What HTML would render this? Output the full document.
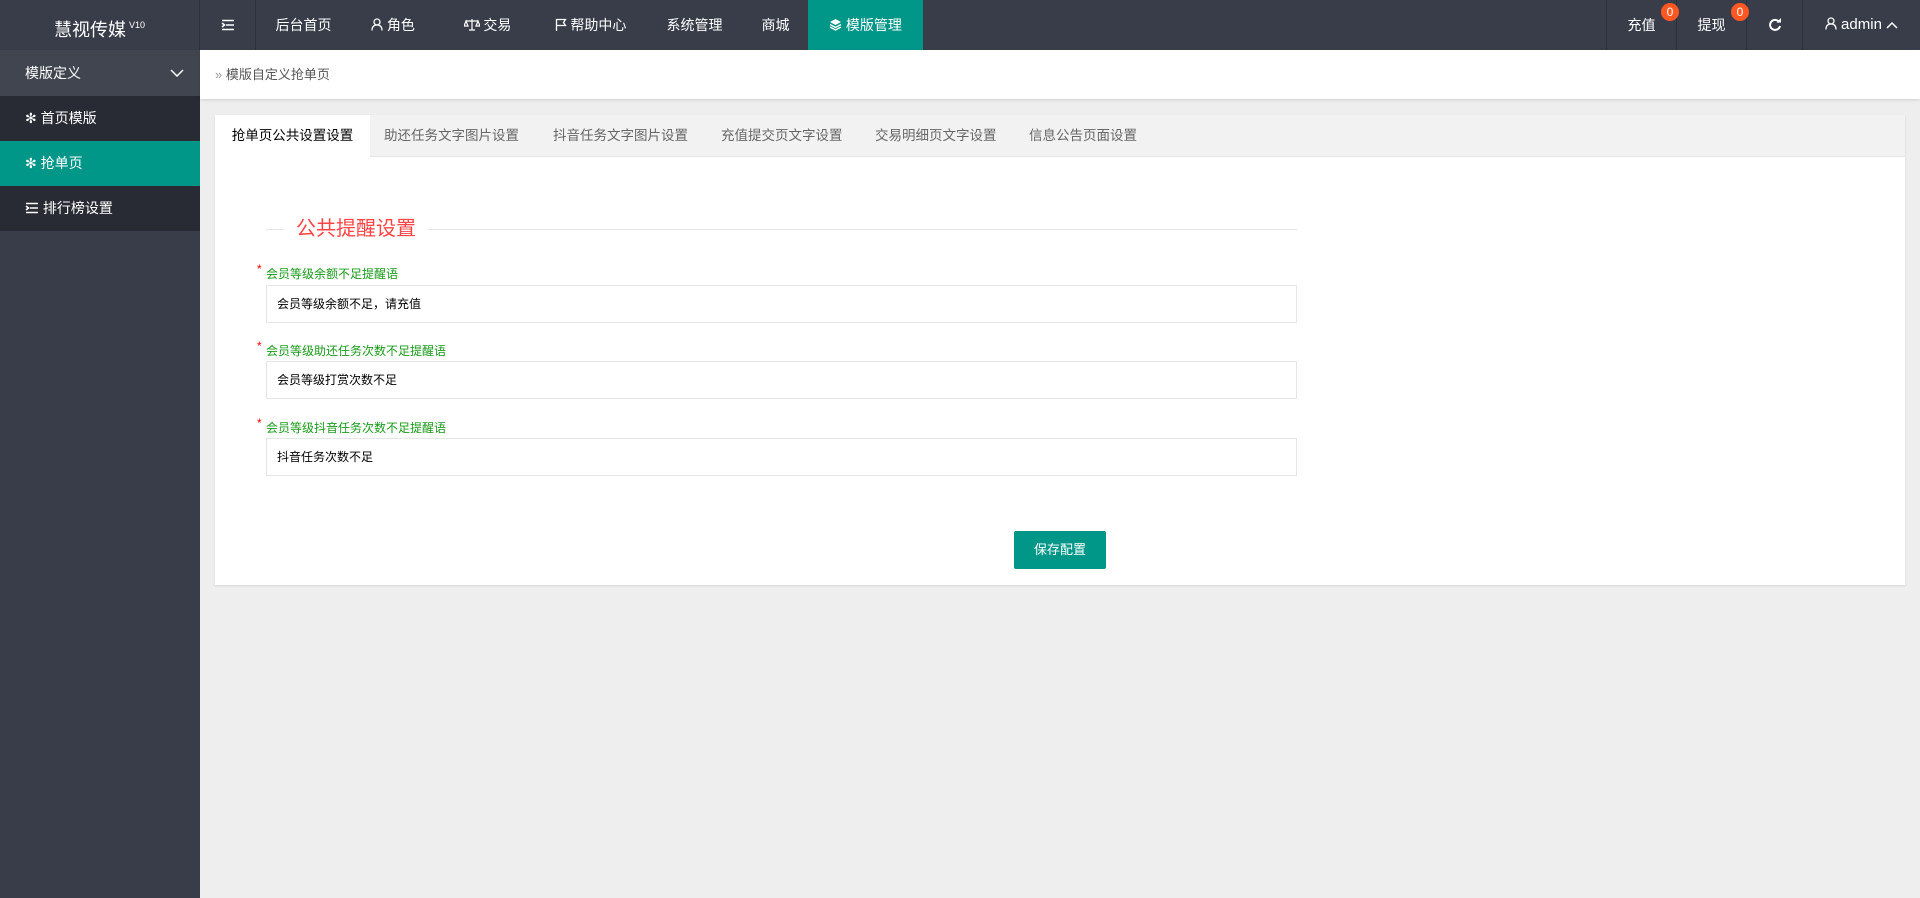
<!DOCTYPE html>
<html><head><meta charset="utf-8"><style>
*{margin:0;padding:0;box-sizing:border-box}
body{width:1920px;height:898px;background:#eee;font-family:"Liberation Sans","Noto Sans CJK SC",sans-serif;font-size:14px;position:relative;overflow:hidden;color:#333}
.hdr{position:absolute;left:0;top:0;width:1920px;height:50px;background:#393D49;color:#fff}
.logo{position:absolute;left:0;top:0;width:200px;height:50px;line-height:50px;text-align:center;font-size:18px;border-right:1px solid #2e313b}
.logo sup{font-size:9px;vertical-align:8px;margin-left:3px}
.nav{position:absolute;top:0;height:50px;line-height:50px;text-align:center;font-size:14px;color:#fff}
.nav.a{background:#009688}
.bd{position:absolute;top:0;width:1px;height:50px;background:#2e313b}
.badge{position:absolute;top:3px;width:18px;height:18px;border-radius:50%;background:#FF5722;color:#fff;font-size:12px;line-height:18px;text-align:center}
.side{position:absolute;left:0;top:50px;width:200px;height:848px;background:#393D49}
.si{position:absolute;left:0;width:200px;color:#fff;font-size:14px;padding-left:25px}
.crumb{position:absolute;left:200px;top:50px;width:1720px;height:49px;background:#fff;box-shadow:0 1px 3px rgba(0,0,0,.12);line-height:49px;padding-left:15px;color:#555;font-size:13px}
.card{position:absolute;left:215px;top:115px;width:1690px;height:470px;background:#fff;box-shadow:0 1px 2px rgba(0,0,0,.1)}
.tabs{position:absolute;left:0;top:0;width:1690px;height:42px;background:#f2f2f2;border-bottom:1px solid #e6e6e6}
.tab{position:absolute;top:0;height:42px;line-height:42px;font-size:13.5px;color:#666}
.tab.a{background:#fff;color:#000;height:43px}
.lbl{position:absolute;left:51px;font-size:12px;color:#1a9a1a}
.lbl b{position:absolute;left:-9px;top:-3px;color:#f00;font-weight:normal}
.inp{position:absolute;left:51px;width:1031px;height:38px;border:1px solid #e6e6e6;line-height:36px;padding-left:10px;font-size:12px;color:#000}
</style></head><body>
<div class="hdr">
<div class="logo">慧视传媒<sup>V10</sup></div>
<div class="bd" style="left:255px"></div>
<div class="nav" style="left:200px;width:55px">
<svg width="14" height="12" viewBox="0 0 14 12" style="vertical-align:-1px"><path d="M1 1.5h12M5 6h8M1 10.5h12M1 4l2.5 2L1 8" stroke="#fff" stroke-width="1.6" fill="none"/></svg></div>
<div class="nav" style="left:259px;width:89px">后台首页</div>
<div class="nav" style="left:346px;width:94px"><svg width="12" height="13" viewBox="0 0 12 13" style="vertical-align:-1px"><circle cx="6" cy="4" r="3" stroke="#fff" fill="none" stroke-width="1.3"/><path d="M1 12.5c0-4 2-5.5 5-5.5s5 1.5 5 5.5" stroke="#fff" fill="none" stroke-width="1.3"/></svg> 角色</div>
<div class="nav" style="left:440px;width:95px"><svg width="16" height="13" viewBox="0 0 16 13" style="vertical-align:-1px"><path d="M8 1v11M2 3h12M5 12h6M2 3l-2 5h4zM14 3l-2 5h4z" stroke="#fff" fill="none" stroke-width="1.2"/></svg> 交易</div>
<div class="nav" style="left:535px;width:111px"><svg width="12" height="13" viewBox="0 0 12 13" style="vertical-align:-1px"><path d="M1.5 1v12M1.5 1.5h9l-2 3 2 3h-9" stroke="#fff" fill="none" stroke-width="1.3"/></svg> 帮助中心</div>
<div class="nav" style="left:646px;width:97px">系统管理</div>
<div class="nav" style="left:742px;width:67px">商城</div>
<div class="nav a" style="left:808px;width:115px"><svg width="13" height="13" viewBox="0 0 13 13" style="vertical-align:-1px"><path d="M6.5 1L12 4 6.5 7 1 4z" fill="#fff"/><path d="M1 6.5l5.5 3 5.5-3M1 9l5.5 3L12 9" stroke="#fff" fill="none" stroke-width="1.3"/></svg> 模版管理</div>
<div class="bd" style="left:1606px"></div><div class="bd" style="left:1676px"></div><div class="bd" style="left:1746px"></div><div class="bd" style="left:1802px"></div>
<div class="nav" style="left:1607px;width:69px">充值</div><div class="badge" style="left:1661px">0</div>
<div class="nav" style="left:1677px;width:69px">提现</div><div class="badge" style="left:1731px">0</div>
<div class="nav" style="left:1747px;width:55px"><svg width="14" height="14" viewBox="0 0 14 14" style="vertical-align:-2px"><path d="M11.5 4.5A5 5 0 1 0 12 8" stroke="#fff" fill="none" stroke-width="2"/><path d="M8.5 4.5h4.5V0z" fill="#fff"/></svg></div>
<div class="nav" style="left:1803px;width:117px;font-size:15px"><svg width="12" height="13" viewBox="0 0 12 13" style="vertical-align:-1px"><circle cx="6" cy="4" r="3" stroke="#fff" fill="none" stroke-width="1.3"/><path d="M1 12.5c0-4 2-5.5 5-5.5s5 1.5 5 5.5" stroke="#fff" fill="none" stroke-width="1.3"/></svg> admin <svg width="12" height="8" viewBox="0 0 12 8"><path d="M1 7l5-5 5 5" stroke="#fff" fill="none" stroke-width="1.5"/></svg></div>
</div>
<div class="side">
<div class="si" style="top:0;height:46px;line-height:46px;background:#41454f">模版定义<svg width="14" height="8" viewBox="0 0 14 8" style="position:absolute;left:170px;top:19px"><path d="M1 1l6 6 6-6" stroke="#fff" fill="none" stroke-width="1.5"/></svg></div>
<div class="si" style="top:46px;height:45px;line-height:45px;background:#282b33">✻ 首页模版</div>
<div class="si" style="top:91px;height:45px;line-height:45px;background:#009688">✻ 抢单页</div>
<div class="si" style="top:136px;height:45px;line-height:45px;background:#282b33"><svg width="14" height="12" viewBox="0 0 14 12" style="vertical-align:-1px"><path d="M1 1.5h12M5 6h8M1 10.5h12M1 4l2.5 2L1 8" stroke="#fff" stroke-width="1.6" fill="none"/></svg> 排行榜设置</div>
</div>
<div class="crumb"><span style="color:#999">»</span> 模版自定义抢单页</div>
<div class="card">
<div class="tabs">
<div class="tab a" style="left:0;width:155px;text-align:center">抢单页公共设置设置</div>
<div class="tab" style="left:169px">助还任务文字图片设置</div>
<div class="tab" style="left:338px">抖音任务文字图片设置</div>
<div class="tab" style="left:506px">充值提交页文字设置</div>
<div class="tab" style="left:660px">交易明细页文字设置</div>
<div class="tab" style="left:814px">信息公告页面设置</div>
</div>
<div style="position:absolute;left:51px;top:114px;width:1031px;height:1px;background:#e6e6e6"></div>
<div style="position:absolute;left:69px;top:100px;background:#fff;padding:0 12px;font-size:20px;color:#f44;line-height:28px">公共提醒设置</div>
<div class="lbl" style="top:150px"><b>*</b>会员等级余额不足提醒语</div>
<div class="inp" style="top:170px">会员等级余额不足，请充值</div>
<div class="lbl" style="top:227px"><b>*</b>会员等级助还任务次数不足提醒语</div>
<div class="inp" style="top:246px">会员等级打赏次数不足</div>
<div class="lbl" style="top:304px"><b>*</b>会员等级抖音任务次数不足提醒语</div>
<div class="inp" style="top:323px">抖音任务次数不足</div>
<div style="position:absolute;left:799px;top:416px;width:92px;height:38px;background:#009688;color:#fff;line-height:38px;text-align:center;font-size:13px;border-radius:2px">保存配置</div>
</div>
</body></html>
